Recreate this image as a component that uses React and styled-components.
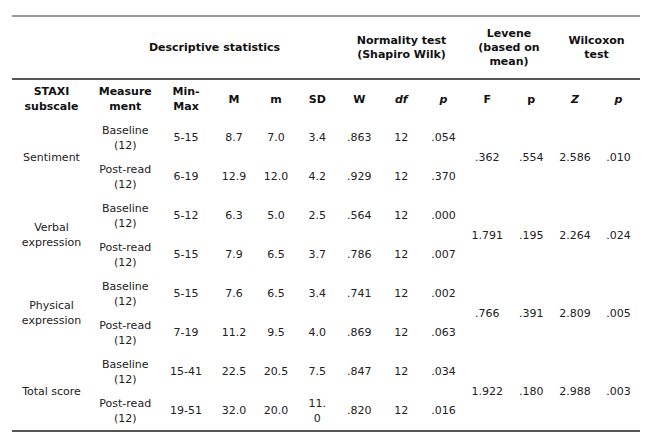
import React from "react";
import styled, { createGlobalStyle } from "styled-components";

const GlobalStyle = createGlobalStyle`
  html, body { margin: 0; padding: 0; background: #ffffff; }
  body {
    font-family: "DejaVu Sans", Verdana, sans-serif;
    font-size: 11px;
    color: #222222;
  }
`;

const Page = styled.div`
  padding: 15px 0 0 12px;
`;

const Grid = styled.div`
  width: 628px;
  display: grid;
  grid-template-columns: 79px 68.5px 53px 43px 41px 41.5px 42.5px 41.5px 43px 44.5px 43.5px 44px 43px;
  grid-template-rows: 63px 38px repeat(8, 39px);
  border-top: 2px solid #9c9c9c;
  border-bottom: 2px solid #555555;
`;

const GroupHeader = styled.div`
  grid-column: span ${(p) => p.$span || 1};
  display: flex;
  align-items: center;
  justify-content: center;
  text-align: center;
  font-weight: bold;
  line-height: 14px;
  border-bottom: 2px solid #555555;
  color: #111;
`;

const ColHeader = styled.div`
  display: flex;
  align-items: center;
  justify-content: center;
  text-align: center;
  font-weight: bold;
  font-style: ${(p) => (p.$italic ? "italic" : "normal")};
  line-height: 15px;
  color: #111;
`;

const Cell = styled.div`
  grid-row: span ${(p) => p.$rows || 1};
  display: flex;
  align-items: center;
  justify-content: center;
  text-align: center;
  line-height: 15px;
  padding: 0 4px;
`;

const groups = [
  {
    label: "Sentiment",
    rows: [
      ["Baseline", "5-15", "8.7", "7.0", "3.4", ".863", "12", ".054"],
      ["Post-read", "6-19", "12.9", "12.0", "4.2", ".929", "12", ".370"],
    ],
    tests: [".362", ".554", "2.586", ".010"],
  },
  {
    label: "Verbal expression",
    rows: [
      ["Baseline", "5-12", "6.3", "5.0", "2.5", ".564", "12", ".000"],
      ["Post-read", "5-15", "7.9", "6.5", "3.7", ".786", "12", ".007"],
    ],
    tests: ["1.791", ".195", "2.264", ".024"],
  },
  {
    label: "Physical expression",
    rows: [
      ["Baseline", "5-15", "7.6", "6.5", "3.4", ".741", "12", ".002"],
      ["Post-read", "7-19", "11.2", "9.5", "4.0", ".869", "12", ".063"],
    ],
    tests: [".766", ".391", "2.809", ".005"],
  },
  {
    label: "Total score",
    rows: [
      ["Baseline", "15-41", "22.5", "20.5", "7.5", ".847", "12", ".034"],
      ["Post-read", "19-51", "32.0", "20.0", "11.0", ".820", "12", ".016"],
    ],
    tests: ["1.922", ".180", "2.988", ".003"],
  },
];

const renderValue = (v) =>
  v === "11.0" ? (
    <>
      11.
      <br />0
    </>
  ) : (
    v
  );

const colHeads = [
  { t: <>STAXI<br />subscale</> },
  { t: <>Measure<br />ment</> },
  { t: <>Min-<br />Max</> },
  { t: "M" },
  { t: "m" },
  { t: "SD" },
  { t: "W" },
  { t: "df", i: true },
  { t: "p", i: true },
  { t: "F" },
  { t: "p" },
  { t: "Z", i: true },
  { t: "p", i: true },
];

export default function App() {
  return (
    <>
      <GlobalStyle />
      <Page>
        <Grid>
          <GroupHeader $span={1} />
          <GroupHeader $span={5}>Descriptive statistics</GroupHeader>
          <GroupHeader $span={3}>
            Normality test
            <br />
            (Shapiro Wilk)
          </GroupHeader>
          <GroupHeader $span={2}>
            Levene
            <br />
            (based on
            <br />
            mean)
          </GroupHeader>
          <GroupHeader $span={2}>
            Wilcoxon
            <br />
            test
          </GroupHeader>

          {colHeads.map((h, i) => (
            <ColHeader key={i} $italic={h.i}>
              <span>{h.t}</span>
            </ColHeader>
          ))}

          {groups.map((g) => (
            <React.Fragment key={g.label}>
              {g.rows.map((r, ri) => (
                <React.Fragment key={ri}>
                  {ri === 0 && <Cell $rows={2}>{g.label}</Cell>}
                  <Cell>
                    <span>
                      {r[0]}
                      <br />
                      (12)
                    </span>
                  </Cell>
                  {r.slice(1).map((v, vi) => (
                    <Cell key={vi}>
                      <span>{renderValue(v)}</span>
                    </Cell>
                  ))}
                  {ri === 0 &&
                    g.tests.map((v, ti) => (
                      <Cell key={"t" + ti} $rows={2}>
                        {v}
                      </Cell>
                    ))}
                </React.Fragment>
              ))}
            </React.Fragment>
          ))}
        </Grid>
      </Page>
    </>
  );
}
